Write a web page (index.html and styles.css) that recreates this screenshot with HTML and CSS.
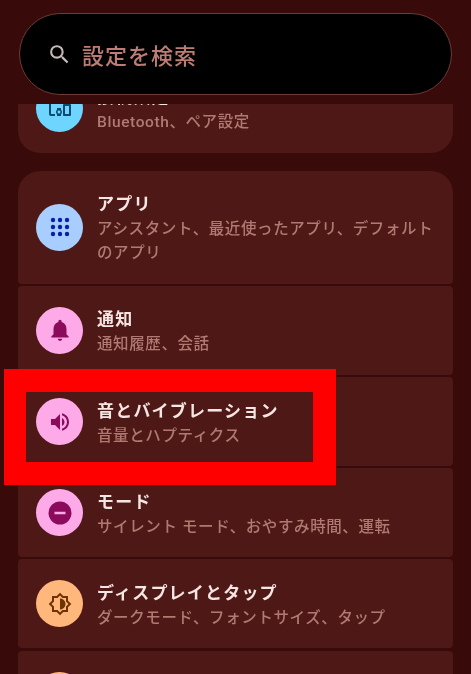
FILE: index.html
```html
<!DOCTYPE html>
<html lang="ja">
<head>
<meta charset="utf-8">
<title>設定</title>
<link rel="stylesheet" href="styles.css">
</head>
<body>
<div class="app">
  <header class="header">
    <div class="search">
      <svg class="search-icon" viewBox="0 0 24 24"><path d="M15.5 14h-.79l-.28-.27A6.471 6.471 0 0 0 16 9.5 6.5 6.5 0 1 0 9.5 16c1.61 0 3.09-.59 4.23-1.57l.27.28v.79l5 4.99L20.49 19l-4.99-5zm-6 0C7.01 14 5 11.99 5 9.5S7.01 5 9.5 5 14 7.01 14 9.5 11.99 14 9.5 14z"/></svg>
      <span class="search-text">設定を検索</span>
    </div>
  </header>
  <main class="scroll">
    <section class="group group-first">
      <div class="row">
        <span class="badge badge-cyan"><svg class="icon" viewBox="0 0 24 24"><path d="M3 6h18V4H3c-1.1 0-2 .9-2 2v12c0 1.1.9 2 2 2h4v-2H3V6zm10 6H9v1.78c-.61.55-1 1.33-1 2.22s.39 1.67 1 2.22V20h4v-1.78c.61-.55 1-1.34 1-2.22s-.39-1.67-1-2.22V12zm-2 5.5c-.83 0-1.5-.67-1.5-1.5s.67-1.5 1.5-1.5 1.5.67 1.5 1.5-.67 1.5-1.5 1.5zM22 8h-6c-.5 0-1 .5-1 1v10c0 .5.5 1 1 1h6c.5 0 1-.5 1-1V9c0-.5-.5-1-1-1zm-1 10h-4v-8h4v8z"/></svg></span>
        <div class="text"><div class="title">接続設定</div><div class="sub">Bluetooth、ペア設定</div></div>
      </div>
    </section>
    <section class="group">
      <div class="row">
        <span class="badge badge-blue"><svg class="icon" viewBox="0 0 24 24"><circle cx="5" cy="5" r="2.2"/><circle cx="12" cy="5" r="2.2"/><circle cx="19" cy="5" r="2.2"/><circle cx="5" cy="12" r="2.2"/><circle cx="12" cy="12" r="2.2"/><circle cx="19" cy="12" r="2.2"/><circle cx="5" cy="19" r="2.2"/><circle cx="12" cy="19" r="2.2"/><circle cx="19" cy="19" r="2.2"/></svg></span>
        <div class="text"><div class="title">アプリ</div><div class="sub">アシスタント、最近使ったアプリ、デフォルトのアプリ</div></div>
      </div>
      <div class="row">
        <span class="badge badge-pink"><svg class="icon icon-large" viewBox="0 0 24 24"><path d="M12 22c1.1 0 2-.9 2-2h-4c0 1.1.9 2 2 2zm6-6v-5c0-3.07-1.63-5.64-4.5-6.32V4c0-.83-.67-1.5-1.5-1.5s-1.5.67-1.5 1.5v.68C7.64 5.36 6 7.92 6 11v5l-2 2v1h16v-1l-2-2z"/></svg></span>
        <div class="text"><div class="title">通知</div><div class="sub">通知履歴、会話</div></div>
      </div>
      <div class="row">
        <span class="badge badge-pink"><svg class="icon" viewBox="0 0 24 24"><path d="M3 9v6h4l5 5V4L7 9H3zm13.5 3c0-1.77-1.02-3.29-2.5-4.03v8.05c1.48-.73 2.5-2.25 2.5-4.02zM14 3.23v2.06c2.89.86 5 3.54 5 6.71s-2.11 5.85-5 6.71v2.06c4.01-.91 7-4.49 7-8.77s-2.99-7.86-7-8.77z"/></svg></span>
        <div class="text"><div class="title">音とバイブレーション</div><div class="sub">音量とハプティクス</div></div>
      </div>
      <div class="row">
        <span class="badge badge-pink"><svg class="icon" viewBox="0 0 24 24"><path d="M12 .5a11.5 11.5 0 1 0 0 23 11.5 11.5 0 0 0 0-23zM6.5 10.8h11v2.4h-11z" fill-rule="evenodd"/></svg></span>
        <div class="text"><div class="title">モード</div><div class="sub">サイレント モード、おやすみ時間、運転</div></div>
      </div>
      <div class="row">
        <span class="badge badge-orange"><svg class="icon" viewBox="0 0 24 24"><path d="M20 15.31L23.31 12 20 8.69V4h-4.69L12 .69 8.69 4H4v4.69L.69 12 4 15.31V20h4.69L12 23.31 15.31 20H20v-4.69zM18 14.48V18h-3.52L12 20.48 9.52 18H6v-3.52L3.52 12 6 9.52V6h3.52L12 3.52 14.48 6H18v3.52L20.48 12 18 14.48zM12 6.5v11c3.03 0 5.5-2.47 5.5-5.5S15.03 6.5 12 6.5z"/></svg></span>
        <div class="text"><div class="title">ディスプレイとタップ</div><div class="sub">ダークモード、フォントサイズ、タップ</div></div>
      </div>
      <div class="row">
        <span class="badge badge-orange"></span>
        <div class="text"><div class="title">壁紙とスタイル</div><div class="sub">色、テーマアイコン</div></div>
      </div>
    </section>
  </main>
  <div class="highlight"></div>
</div>
</body>
</html>
```
FILE: styles.css
```css
* { box-sizing: border-box; }
html, body { margin: 0; height: 100%; }
body {
  background: #380a0a;
  overflow: hidden;
  font-family: "Roboto", "Noto Sans CJK JP", sans-serif;
}
.app {
  position: relative;
  display: flex;
  flex-direction: column;
  width: 471px;
  height: 674px;
  background: #380a0a;
  overflow: hidden;
}
.header {
  flex: none;
  height: 104px;
  padding: 13px 19px 9px;
}
.search {
  display: flex;
  align-items: center;
  height: 82px;
  padding-left: 27px;
  background: #000;
  border: 1px solid #6e3b36;
  border-radius: 41px;
  filter: blur(.45px);
}
.search-icon {
  width: 25px;
  height: 25px;
  flex: none;
  fill: #c6bab7;
}
.search-text {
  margin-left: 10px;
  font-size: 22px;
  font-weight: 500;
  letter-spacing: 1px;
  color: #bd7d74;
}
.scroll {
  flex: 1;
  min-height: 0;
  overflow: hidden;
  padding: 0 18px;
  filter: blur(.45px);
}
.group {
  display: flex;
  flex-direction: column;
  gap: 2.4px;
  margin-bottom: 18px;
}
.group-first {
  margin-top: -40px;
}
.row {
  display: flex;
  align-items: center;
  gap: 14px;
  padding: 20.4px 18px;
  background: #4e1816;
  border-radius: 4px;
}
.group > .row:first-child { border-top-left-radius: 22px; border-top-right-radius: 22px; }
.group > .row:last-child { border-bottom-left-radius: 22px; border-bottom-right-radius: 22px; }
.badge {
  display: flex;
  align-items: center;
  justify-content: center;
  flex: none;
  width: 47px;
  height: 47px;
  border-radius: 50%;
}
.icon { width: 24px; height: 24px; fill: currentColor; }
.icon-large { width: 26px; height: 26px; }
.badge-cyan { background: #6dd5ff; color: #0d4a6e; }
.badge-blue { background: #a8cdff; color: #0a1fa8; }
.badge-pink { background: #ffaae8; color: #8b0a5c; }
.badge-orange { background: #ffb77c; color: #6e3300; }
.text {
  min-width: 0;
  flex: 1;
  padding-top: 1px;
  margin-bottom: -2px;
}
.title {
  font-size: 17px;
  font-weight: 700;
  line-height: 24px;
  letter-spacing: 1.2px;
  color: #f5e6e3;
}
.sub {
  margin-top: 1px;
  font-size: 15.5px;
  font-weight: 500;
  line-height: 24px;
  letter-spacing: .6px;
  color: #b07a72;
}
.highlight {
  position: absolute;
  left: 4px;
  top: 369px;
  width: 332px;
  height: 116px;
  border: 23px solid #ff0000;
  border-left-width: 22px;
}
```
